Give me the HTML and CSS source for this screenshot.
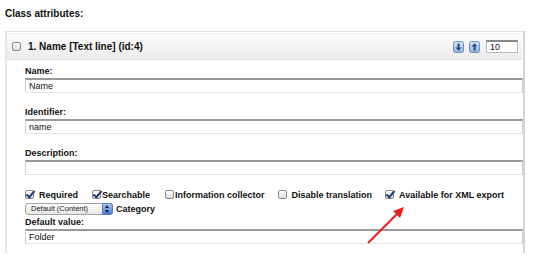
FILE: index.html
```html
<!DOCTYPE html>
<html lang="en">
<head>
  <meta charset="UTF-8" />
  <title>Class attributes</title>
  <link rel="stylesheet" href="styles.css">
</head>
<body>
  <div class="page">
    <h2 class="section-title">Class attributes:</h2>

    <div class="attr-box">
      <div class="attr-head">
        <span class="cb"></span>
        <span class="attr-title">1. Name [Text line] (id:4)</span>
        <span class="head-tools">
          <svg class="move-btn" width="11" height="12" viewBox="0 0 11 12">
            <defs>
              <linearGradient id="bg1" x1="0" y1="0" x2="0" y2="1">
                <stop offset="0" stop-color="#d9e6f5"/>
                <stop offset="1" stop-color="#93b1d8"/>
              </linearGradient>
            </defs>
            <rect x="0.5" y="0.5" width="10" height="11" rx="2" fill="url(#bg1)" stroke="#6d8fbd"/>
            <path d="M4.5 2.5h2v4h2l-3 3.2-3-3.2h2z" fill="#1f4b8a"/>
          </svg>
          <svg class="move-btn" width="11" height="12" viewBox="0 0 11 12">
            <rect x="0.5" y="0.5" width="10" height="11" rx="2" fill="url(#bg1)" stroke="#6d8fbd"/>
            <path d="M4.5 9.5h2v-4h2l-3-3.2-3 3.2h2z" fill="#1f4b8a"/>
          </svg>
          <span class="pos-input">10</span>
        </span>
      </div>

      <div class="attr-body">
        <div class="field">
          <div class="field-label">Name:</div>
          <div class="text-input">Name</div>
        </div>
        <div class="field">
          <div class="field-label">Identifier:</div>
          <div class="text-input">name</div>
        </div>
        <div class="field">
          <div class="field-label">Description:</div>
          <div class="text-input"></div>
        </div>

        <div class="flags">
          <span class="flag flag-required"><span class="cb checked"></span>Required</span>
          <span class="flag flag-search"><span class="cb checked"></span>Searchable</span>
          <span class="flag flag-info"><span class="cb"></span>Information collector</span>
          <span class="flag flag-trans"><span class="cb"></span>Disable translation</span>
          <span class="flag flag-xml"><span class="cb checked"></span>Available for XML export</span>
        </div>

        <div class="category-row">
          <span class="select">Default (Content)<span class="stepper"></span></span>
          <span class="category-label">Category</span>
        </div>

        <div class="field last">
          <div class="field-label">Default value:</div>
          <div class="text-input">Folder</div>
        </div>
      </div>
    </div>

    <svg class="pointer" width="550" height="258" viewBox="0 0 550 258">
      <line x1="368" y1="243" x2="399" y2="212" stroke="#ec1c1c" stroke-width="2"/>
      <path d="M404 207 L393 211 L400 218 Z" fill="#ec1c1c"/>
    </svg>
  </div>
</body>
</html>
```

FILE: styles.css
```css
body {
  margin: 0;
  background: #fff;
  font-family: "Liberation Sans", Arial, sans-serif;
  color: #111;
}

.page {
  position: relative;
  width: 550px;
  height: 258px;
  overflow: hidden;
}

.section-title {
  margin: 0;
  padding: 7px 0 0 5px;
  height: 24px;
  box-sizing: border-box;
  font-size: 10px;
  font-weight: bold;
  line-height: 13px;
}

.attr-box {
  margin: 7px 0 0 5px;
  width: 520px;
  box-sizing: border-box;
  border: 1px solid #e2e2e2;
  border-right: 2px solid #d4d4d4;
  border-left: 2px solid #e6e6e6;
  border-bottom: none;
  padding-top: 1px;
  height: 222px;
}

.attr-head {
  display: flex;
  align-items: center;
  height: 27px;
  margin-right: 1px;
  padding: 0 4px 0 5px;
  background: linear-gradient(#fbfbfb, #ececec);
  border-top: 1px solid #f0f0f0;
  border-bottom: 1px solid #dcdcdc;
  box-sizing: border-box;
}

.attr-title {
  margin-left: 7px;
  font-size: 10px;
  font-weight: bold;
}

.head-tools {
  margin-left: auto;
  display: flex;
  align-items: center;
  gap: 5px;
}

.move-btn {
  display: block;
}

.pos-input {
  width: 32px;
  height: 13px;
  box-sizing: border-box;
  border: 1px solid #bbb;
  border-top: 2px solid #888;
  background: #fff;
  font-size: 9px;
  line-height: 11px;
  padding-left: 3px;
  margin-left: 1px;
}

.cb {
  display: inline-block;
  width: 9px;
  height: 9px;
  box-sizing: border-box;
  border: 1px solid #8a8a8a;
  border-radius: 2px;
  background: linear-gradient(#ffffff, #dcdcdc);
  position: relative;
  vertical-align: -1px;
}

.cb.checked::after {
  content: "";
  position: absolute;
  left: 2px;
  top: -2px;
  width: 3px;
  height: 7px;
  border: solid #1f3f78;
  border-width: 0 2px 2px 0;
  transform: rotate(40deg);
}

.attr-body {
  padding: 5px 0 0 18px;
}

.field {
  margin-bottom: 13px;
}

.field.last {
  margin-bottom: 0;
}

.field-label {
  font-size: 9px;
  font-weight: bold;
  line-height: 13px;
}

.text-input {
  height: 15px;
  box-sizing: border-box;
  border: 1px solid #d0d0d0;
  border-top: 2px solid #9a9a9a;
  border-bottom: 1px solid #e4e4e4;
  font-size: 9px;
  line-height: 12px;
  padding-left: 3px;
}

.flags {
  display: flex;
  height: 13px;
  align-items: center;
  font-size: 9px;
  font-weight: bold;
}

.flag .cb {
  margin-right: 5px;
}

.flag-search .cb,
.flag-info .cb {
  margin-right: 1px;
}

.flag-search {
  margin-left: 14px;
}

.flag-info {
  margin-left: 15px;
}

.flag-trans {
  margin-left: 13px;
}

.flag-xml {
  margin-left: 13px;
}

.category-row {
  display: flex;
  align-items: center;
  height: 14px;
  margin-top: 1px;
}

.select {
  position: relative;
  width: 88px;
  height: 12px;
  box-sizing: border-box;
  border: 1px solid #a5a5a5;
  border-radius: 3px;
  background: linear-gradient(#ffffff, #e6e6e6);
  font-size: 7.5px;
  line-height: 10px;
  padding-left: 5px;
  color: #222;
}

.stepper {
  position: absolute;
  right: -1px;
  top: -1px;
  width: 11px;
  height: 12px;
  border-radius: 0 3px 3px 0;
  background: linear-gradient(#a9c6ec, #4b7fd0);
  border: 1px solid #5a7fb4;
  box-sizing: border-box;
}

.stepper::before,
.stepper::after {
  content: "";
  position: absolute;
  left: 2px;
  border-left: 2.5px solid transparent;
  border-right: 2.5px solid transparent;
}

.stepper::before {
  top: 1px;
  border-bottom: 3px solid #10224a;
}

.stepper::after {
  bottom: 1px;
  border-top: 3px solid #10224a;
}

.category-label {
  margin-left: 3px;
  font-size: 9px;
  font-weight: bold;
}

.pointer {
  position: absolute;
  left: 0;
  top: 0;
  pointer-events: none;
}
```
